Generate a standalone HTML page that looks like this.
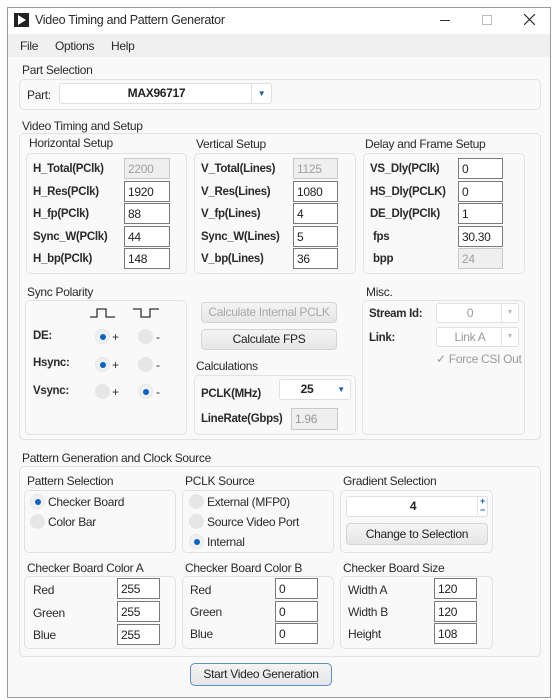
<!DOCTYPE html>
<html><head><meta charset="utf-8"><style>
*{box-sizing:border-box;margin:0;padding:0}
body{width:557px;height:700px;background:#fff;font-family:"Liberation Sans",sans-serif;font-size:12px;color:#222;position:relative;overflow:hidden;letter-spacing:-0.3px}
.a{position:absolute}
.win{left:7px;top:7px;width:544px;height:691px;border:1px solid #9a9a9a;background:#f9f9f9}
.title{left:8px;top:8px;width:542px;height:26px;background:#fff}
.menu{left:8px;top:34px;width:542px;height:23px;background:#f0f0f0}
.box{position:absolute;border:1px solid #e2e2e2;border-radius:5px;background:#f9f9f9}
.in{position:absolute;border:1px solid #7a7a7a;background:#fff;height:21px;padding:3px 3px;font-size:12px}
.dis{border-color:#c8c8c8;background:#efefef;color:#a0a0a0}
.lbl{position:absolute;font-weight:bold;font-size:11.5px;color:#2a2a2a}
.t{position:absolute;font-size:12px;color:#2a2a2a}
.btn{position:absolute;border:1px solid #d4d4d4;border-radius:4px;background:linear-gradient(#f4f4f4,#e6e6e6);text-align:center;font-size:12px;line-height:19px}
.combo{position:absolute;border:1px solid #e0e0e0;border-radius:3px;background:#fff;text-align:center;font-size:12px;font-weight:bold}
.rad{position:absolute;width:15px;height:15px;border-radius:50%;background:#e6e6e6;border:1px solid #e6e6e6}
.rad.on{background:#f0f0f0}
.rad.on::after{content:"";position:absolute;left:4px;top:4px;width:6px;height:6px;border-radius:50%;background:#0a64c8}
</style></head><body>
<div class="a win"></div>
<div class="a title"></div>
<svg class="a" style="left:14px;top:13px" width="15" height="14"><rect width="15" height="14" fill="#222"/><path d="M4 2 L12 7 L4 12Z" fill="#fff"/></svg>
<div class="t" style="left:35px;top:13px;font-size:12.5px">Video Timing and Pattern Generator</div>
<div class="a" style="left:440px;top:20px;width:10px;height:1px;background:#333"></div>
<div class="a" style="left:482px;top:15px;width:10px;height:10px;border:1px solid #bbb"></div>
<svg class="a" style="left:524px;top:14px" width="11" height="11"><path d="M0 0L11 11M11 0L0 11" stroke="#333" stroke-width="1.2"/></svg>
<div class="a menu"></div>
<div class="t" style="left:20px;top:39px">File</div>
<div class="t" style="left:55px;top:39px">Options</div>
<div class="t" style="left:111px;top:39px">Help</div>

<div class="t" style="left:22px;top:63px">Part Selection</div>
<div class="box" style="left:19px;top:79px;width:522px;height:31px"></div>
<div class="t" style="left:27px;top:88px">Part:</div>
<div class="combo" style="left:59px;top:83px;width:213px;height:21px;line-height:19px"><span style="position:absolute;left:0;width:193px">MAX96717</span><span style="position:absolute;right:0;top:0;width:20px;height:19px;border-left:1px solid #e0e0e0;color:#1a5fb0;font-size:8px">▼</span></div>

<div class="t" style="left:22px;top:119px">Video Timing and Setup</div>
<div class="box" style="left:19px;top:133px;width:522px;height:307px"></div>

<div class="t" style="left:29px;top:136px">Horizontal Setup</div>
<div class="box" style="left:26px;top:153px;width:161px;height:121px"></div>
<div class="lbl" style="left:33px;top:163px">H_Total(PClk)</div><div class="in dis" style="left:124px;top:158px;width:46px">2200</div>
<div class="lbl" style="left:33px;top:186px">H_Res(PClk)</div><div class="in" style="left:124px;top:181px;width:46px">1920</div>
<div class="lbl" style="left:33px;top:208px">H_fp(PClk)</div><div class="in" style="left:124px;top:203px;width:46px">88</div>
<div class="lbl" style="left:33px;top:231px">Sync_W(PClk)</div><div class="in" style="left:124px;top:226px;width:46px">44</div>
<div class="lbl" style="left:33px;top:253px">H_bp(PClk)</div><div class="in" style="left:124px;top:248px;width:46px">148</div>

<div class="t" style="left:196px;top:137px">Vertical Setup</div>
<div class="box" style="left:194px;top:153px;width:162px;height:121px"></div>
<div class="lbl" style="left:201px;top:163px">V_Total(Lines)</div><div class="in dis" style="left:293px;top:158px;width:45px">1125</div>
<div class="lbl" style="left:201px;top:186px">V_Res(Lines)</div><div class="in" style="left:293px;top:181px;width:45px">1080</div>
<div class="lbl" style="left:201px;top:208px">V_fp(Lines)</div><div class="in" style="left:293px;top:203px;width:45px">4</div>
<div class="lbl" style="left:201px;top:231px">Sync_W(Lines)</div><div class="in" style="left:293px;top:226px;width:45px">5</div>
<div class="lbl" style="left:201px;top:253px">V_bp(Lines)</div><div class="in" style="left:293px;top:248px;width:45px">36</div>

<div class="t" style="left:365px;top:137px">Delay and Frame Setup</div>
<div class="box" style="left:363px;top:153px;width:162px;height:121px"></div>
<div class="lbl" style="left:370px;top:163px">VS_Dly(PClk)</div><div class="in" style="left:458px;top:158px;width:45px">0</div>
<div class="lbl" style="left:370px;top:186px">HS_Dly(PCLK)</div><div class="in" style="left:458px;top:181px;width:45px">0</div>
<div class="lbl" style="left:370px;top:208px">DE_Dly(PClk)</div><div class="in" style="left:458px;top:203px;width:45px">1</div>
<div class="lbl" style="left:373px;top:231px">fps</div><div class="in" style="left:458px;top:226px;width:45px">30.30</div>
<div class="lbl" style="left:373px;top:253px">bpp</div><div class="in dis" style="left:458px;top:248px;width:45px">24</div>

<div class="t" style="left:27px;top:285px">Sync Polarity</div>
<div class="box" style="left:25px;top:300px;width:162px;height:135px"></div>
<svg class="a" style="left:89px;top:307px" width="70" height="12"><path d="M1 10H8V2H17V10H26M44 2H52V10H61V2H70" stroke="#333" stroke-width="1.3" fill="none"/></svg>
<div class="lbl" style="left:33px;top:330px">DE:</div>
<div class="lbl" style="left:33px;top:357px">Hsync:</div>
<div class="lbl" style="left:33px;top:385px">Vsync:</div>
<div class="rad on" style="left:95px;top:329px"></div><div class="t" style="left:112px;top:330px">+</div>
<div class="rad" style="left:138px;top:329px"></div><div class="t" style="left:156px;top:330px">-</div>
<div class="rad on" style="left:95px;top:357px"></div><div class="t" style="left:112px;top:358px">+</div>
<div class="rad" style="left:138px;top:357px"></div><div class="t" style="left:156px;top:358px">-</div>
<div class="rad" style="left:95px;top:384px"></div><div class="t" style="left:112px;top:385px">+</div>
<div class="rad on" style="left:138px;top:384px"></div><div class="t" style="left:156px;top:385px">-</div>

<div class="btn" style="left:201px;top:302px;width:136px;height:21px;color:#a8a8a8">Calculate Internal PCLK</div>
<div class="btn" style="left:201px;top:329px;width:136px;height:21px">Calculate FPS</div>
<div class="t" style="left:196px;top:359px">Calculations</div>
<div class="box" style="left:194px;top:375px;width:162px;height:60px"></div>
<div class="lbl" style="left:201px;top:388px">PCLK(MHz)</div>
<div class="combo" style="left:279px;top:379px;width:72px;height:21px;line-height:19px"><span style="position:absolute;left:0;width:54px">25</span><span style="position:absolute;right:0;width:18px;color:#1a5fb0;font-size:8px">▼</span></div>
<div class="lbl" style="left:201px;top:413px">LineRate(Gbps)</div>
<div class="in dis" style="left:291px;top:408px;width:47px;height:22px;color:#999">1.96</div>

<div class="t" style="left:366px;top:285px">Misc.</div>
<div class="box" style="left:362px;top:300px;width:163px;height:135px"></div>
<div class="lbl" style="left:369px;top:308px">Stream Id:</div>
<div class="combo" style="left:436px;top:303px;width:83px;height:20px;line-height:18px;font-weight:normal;color:#999"><span style="position:absolute;left:0;width:66px">0</span><span style="position:absolute;right:0;width:17px;border-left:1px solid #e6e6e6;font-size:7px;color:#bbb">▼</span></div>
<div class="lbl" style="left:369px;top:332px">Link:</div>
<div class="combo" style="left:436px;top:327px;width:83px;height:20px;line-height:18px;font-weight:normal;color:#999"><span style="position:absolute;left:0;width:66px">Link A</span><span style="position:absolute;right:0;width:17px;border-left:1px solid #e6e6e6;font-size:7px;color:#bbb">▼</span></div>
<div class="t" style="left:436px;top:352px;color:#999">✓ Force CSI Out</div>

<div class="t" style="left:22px;top:451px">Pattern Generation and Clock Source</div>
<div class="box" style="left:19px;top:466px;width:522px;height:191px"></div>

<div class="t" style="left:27px;top:474px">Pattern Selection</div>
<div class="box" style="left:24px;top:490px;width:152px;height:63px"></div>
<div class="rad on" style="left:30px;top:494px"></div><div class="t" style="left:48px;top:495px">Checker Board</div>
<div class="rad" style="left:30px;top:514px"></div><div class="t" style="left:48px;top:515px">Color Bar</div>

<div class="t" style="left:185px;top:474px">PCLK Source</div>
<div class="box" style="left:182px;top:490px;width:152px;height:63px"></div>
<div class="rad" style="left:189px;top:494px"></div><div class="t" style="left:207px;top:495px">External (MFP0)</div>
<div class="rad" style="left:189px;top:514px"></div><div class="t" style="left:207px;top:515px">Source Video Port</div>
<div class="rad on" style="left:189px;top:534px"></div><div class="t" style="left:207px;top:535px">Internal</div>

<div class="t" style="left:343px;top:474px">Gradient Selection</div>
<div class="box" style="left:340px;top:490px;width:153px;height:63px"></div>
<div class="combo" style="left:346px;top:496px;width:142px;height:21px;line-height:19px"><span style="position:absolute;left:0;width:132px">4</span><span style="position:absolute;right:0;width:10px;color:#1a5fb0;font-size:9px;line-height:9px;border-left:1px solid #e6e6e6">+<br>−</span></div>
<div class="btn" style="left:346px;top:523px;width:142px;height:22px;line-height:20px">Change to Selection</div>

<div class="t" style="left:27px;top:561px">Checker Board Color A</div>
<div class="box" style="left:24px;top:576px;width:152px;height:73px"></div>
<div class="t" style="left:33px;top:583px">Red</div><div class="in" style="left:117px;top:578px;width:43px">255</div>
<div class="t" style="left:33px;top:606px">Green</div><div class="in" style="left:117px;top:601px;width:43px">255</div>
<div class="t" style="left:33px;top:628px">Blue</div><div class="in" style="left:117px;top:624px;width:43px">255</div>

<div class="t" style="left:185px;top:561px">Checker Board Color B</div>
<div class="box" style="left:182px;top:576px;width:152px;height:73px"></div>
<div class="t" style="left:190px;top:583px">Red</div><div class="in" style="left:275px;top:578px;width:43px">0</div>
<div class="t" style="left:190px;top:605px">Green</div><div class="in" style="left:275px;top:601px;width:43px">0</div>
<div class="t" style="left:190px;top:627px">Blue</div><div class="in" style="left:275px;top:623px;width:43px">0</div>

<div class="t" style="left:343px;top:561px">Checker Board Size</div>
<div class="box" style="left:340px;top:576px;width:153px;height:73px"></div>
<div class="t" style="left:348px;top:583px">Width A</div><div class="in" style="left:434px;top:578px;width:43px">120</div>
<div class="t" style="left:348px;top:605px">Width B</div><div class="in" style="left:434px;top:601px;width:43px">120</div>
<div class="t" style="left:348px;top:627px">Height</div><div class="in" style="left:434px;top:623px;width:43px">108</div>

<div class="btn" style="left:190px;top:663px;width:142px;height:23px;line-height:21px;border-color:#5a8fc8;border-radius:5px">Start Video Generation</div>
</body></html>
